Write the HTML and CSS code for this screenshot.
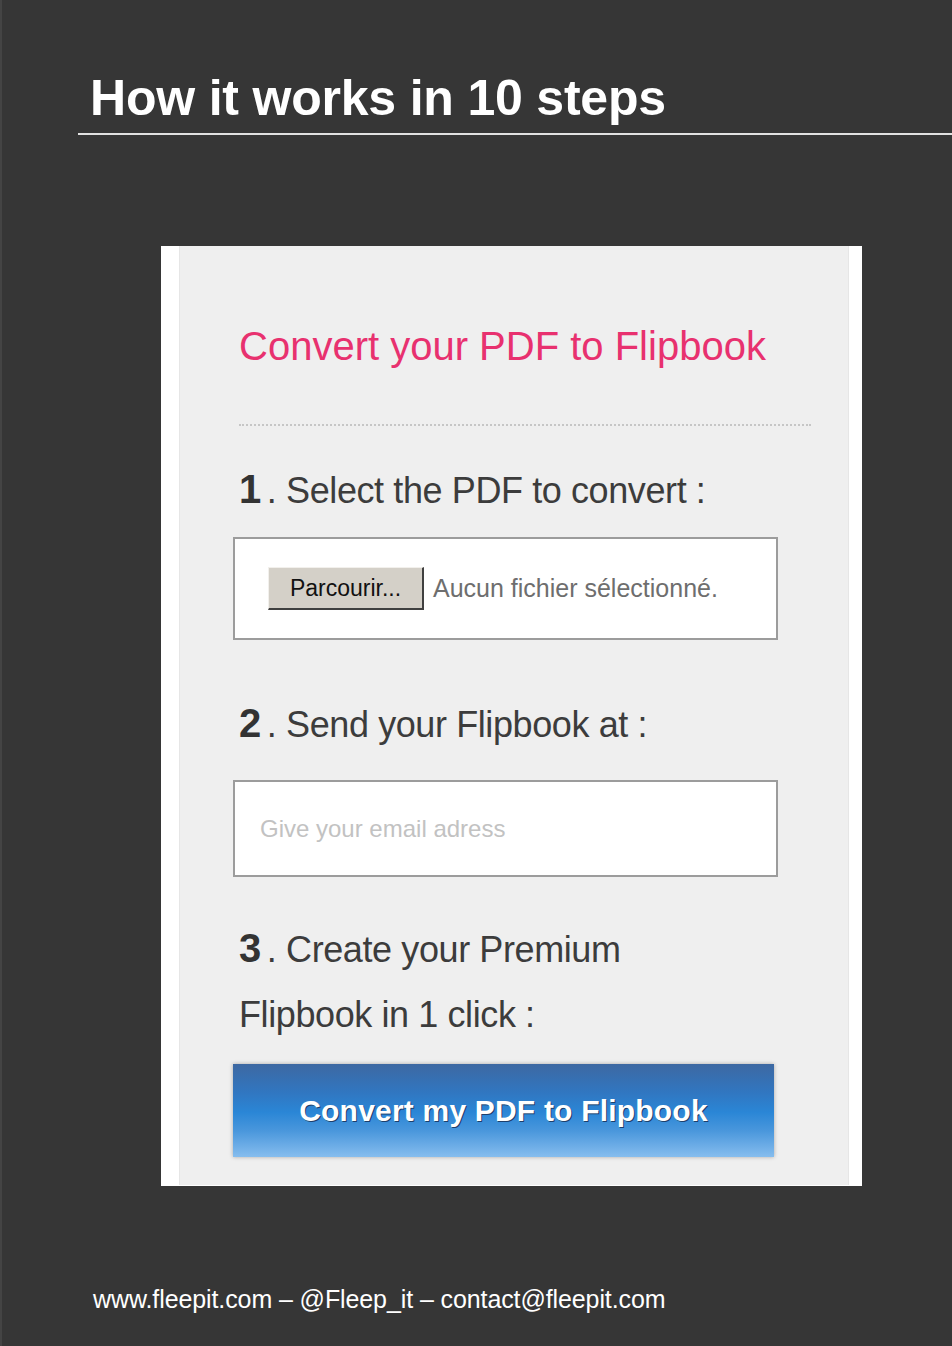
FILE: index.html
```html
<!DOCTYPE html>
<html lang="en">
<head>
  <meta charset="UTF-8" />
  <meta name="viewport" content="width=device-width, initial-scale=1.0"/>
  <title>How it works in 10 steps</title>
  <link rel="stylesheet" href="styles.css">
</head>
<body>
  <div class="page-head">
    <h1>How it works in 10 steps</h1>
  </div>

  <div class="shot">
    <div class="panel">
      <h2>Convert your PDF to Flipbook</h2>
      <div class="dots"></div>

      <p class="step"><span class="num">1</span>. Select the PDF to convert :</p>
      <div class="field">
        <span class="browse">Parcourir...</span>
        <span class="nofile">Aucun fichier sélectionné.</span>
      </div>

      <p class="step step-2"><span class="num">2</span>. Send your Flipbook at :</p>
      <div class="field field-mail">
        <span class="placeholder">Give your email adress</span>
      </div>

      <p class="step step-3"><span class="num">3</span>. Create your Premium<br>Flipbook in 1 click :</p>
      <div class="go">Convert my PDF to Flipbook</div>
    </div>
  </div>

  <div class="foot">www.fleepit.com – @Fleep_it – contact@fleepit.com</div>
</body>
</html>
```

FILE: styles.css
```css
html {
  background: #363636;
}
body {
  margin: 0;
  min-height: 100vh;
  background: #363636;
  box-shadow: inset 2px 0 0 #444;
  font-family: 'Liberation Sans', Arial, sans-serif;
  color: white;
  overflow: hidden;
}
.page-head {
  margin-left: 78px;
  padding: 68px 0 5px 12px;
  border-bottom: 2px solid #e2e2e2;
}
h1 {
  margin: 0;
  font-size: 50px;
  line-height: 60px;
  font-weight: bold;
  letter-spacing: -0.2px;
}
.shot {
  margin: 111px 0 0 161px;
  width: 701px;
  height: 940px;
  box-sizing: border-box;
  background: #fff;
  padding: 0 13px 1px 18px;
}
.panel {
  height: 100%;
  box-sizing: border-box;
  background: #efefef;
  border-left: 1px solid #e6e6e6;
  border-right: 1px solid #e6e6e6;
  padding: 76px 0 0 53px;
}
h2 {
  margin: 0 0 0 6px;
  font-size: 40px;
  line-height: 48px;
  font-weight: normal;
  color: #e8316f;
}
.dots {
  margin: 54px 0 0 6px;
  width: 572px;
  border-top: 2px dotted #c6c6c6;
}
.step {
  margin: 43px 0 0 6px;
  font-size: 36px;
  line-height: 40px;
  color: #3c3c3c;
  letter-spacing: -0.4px;
}
.num {
  font-size: 40px;
  font-weight: bold;
  color: #333;
  margin-right: 6px;
}
.step-2 {
  margin-top: 63px;
}
.step-3 {
  margin-top: 39px;
  line-height: 65px;
}
.field {
  margin-top: 26px;
  width: 545px;
  height: 103px;
  box-sizing: border-box;
  background: #fff;
  border: 2px solid #9c9c9c;
  display: flex;
  align-items: center;
  padding-left: 33px;
}
.browse {
  width: 156px;
  height: 43px;
  box-sizing: border-box;
  background: #d4d0c8;
  border-top: 1px solid #f2f0ec;
  border-left: 1px solid #f2f0ec;
  border-right: 2px solid #404040;
  border-bottom: 2px solid #404040;
  font-size: 23px;
  line-height: 40px;
  color: #111;
  text-align: center;
}
.nofile {
  margin-left: 9px;
  font-size: 25px;
  color: #6e6e6e;
}
.field-mail {
  margin-top: 35px;
  height: 97px;
  padding-left: 25px;
}
.placeholder {
  font-size: 24px;
  color: #c2c2c2;
}
.go {
  margin-top: 17px;
  width: 541px;
  height: 93px;
  box-sizing: border-box;
  background: linear-gradient(to bottom, #3d68a2 0%, #3176c0 30%, #2a86d6 52%, #4a97dc 72%, #86bdee 100%);
  box-shadow: 0 0 4px rgba(0,0,0,0.3);
  color: #fff;
  font-size: 30px;
  font-weight: bold;
  letter-spacing: 0.2px;
  text-align: center;
  line-height: 93px;
  text-shadow: 1px 1px 0 #1d3f6b;
}
.foot {
  margin: 98px 0 0 93px;
  font-size: 25px;
  line-height: 30px;
  letter-spacing: -0.1px;
}
```
